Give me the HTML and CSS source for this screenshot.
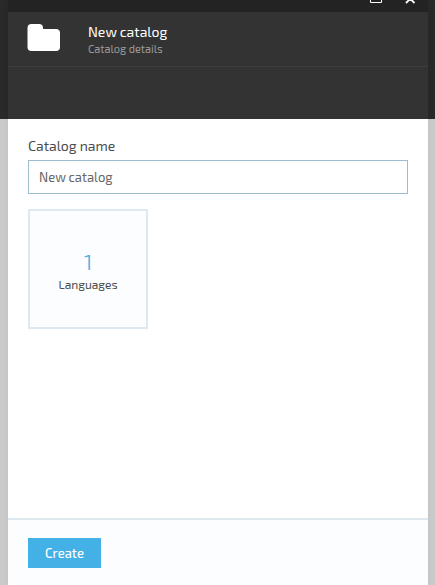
FILE: index.html
```
<!DOCTYPE html>
<html lang="en">
<head>
<meta charset="utf-8">
<title>New catalog</title>
<link rel="stylesheet" href="styles.css">
</head>
<body>
<main class="blade">
  <div class="toolbar">
    <svg class="controls" width="48" height="12" viewBox="0 0 48 12" fill="none" stroke="#fff">
      <path d="M.5 -6v8.500h11v-8.500"/>
      <path d="M36 3l8.500-8.500M44.500 3l-8.500-8.500" stroke-width="1.800"/>
    </svg>
  </div>
  <header class="header">
    <svg class="folder" width="33" height="27" viewBox="0 0 33 27" fill="#fff">
      <path d="M4.500 0h7.500q4 0 4 4V5h13q4 0 4 4v14q0 4-4 4H4.500q-4 0-4-4V4q0-4 4-4z"/>
    </svg>
    <div class="heading">
      <h1 class="title"><span>New catalog</span></h1>
      <div class="subtitle"><span>Catalog details</span></div>
    </div>
  </header>
  <div class="subheader"></div>
  <section class="content">
    <label class="label" for="name"><span>Catalog name</span></label>
    <input class="input" id="name" type="text" value="New catalog">
    <div class="tile">
      <div class="count">1</div>
      <div class="caption"><span>Languages</span></div>
    </div>
  </section>
  <footer class="footer">
    <button class="button" type="button"><span>Create</span></button>
  </footer>
</main>
</body>
</html>
```
FILE: styles.css
```
* { box-sizing: border-box; }
body {
  margin: 0;
  height: 585px;
  padding: 0 7px 0 8px;
  overflow: hidden;
  background: linear-gradient(#292929 119px, #cacaca 119px);
  font-family: "Exo 2", Roboto, sans-serif;
  color: #4d4d4d;
}
.blade {
  display: flex;
  flex-direction: column;
  height: 585px;
  background: #fff;
  box-shadow: 0 0 5px rgba(0, 0, 0, .05);
}
.toolbar {
  display: flex;
  justify-content: flex-end;
  height: 12px;
  padding-right: 10px;
  background: #232323;
}
.header {
  display: flex;
  height: 55px;
  padding: 12px 20px 0 19px;
  background: #333;
  border-bottom: 1px solid #3d3d3d;
}
.folder { flex: none; margin-right: 28px; }
.title {
  margin: -1px 0 0;
  font-size: 14px;
  line-height: 18px;
  font-weight: 400;
  color: #fff;
}
.subtitle {
  font-size: 11px;
  line-height: 16px;
  color: #999;
}
.subheader { height: 52px; background: #333; }
.content { flex: 1; padding: 17px 20px 0; }
.label {
  display: block;
  height: 24px;
  font-size: 14px;
  line-height: 20px;
}
.input {
  display: block;
  width: 100%;
  height: 34px;
  margin-bottom: 15px;
  padding: 0 10px;
  border: 1px solid #9bbdd1;
  outline: 0;
  border-radius: 0;
  background: #fff;
  color: #666;
  font: 13px "Exo 2", Roboto, sans-serif;
}
.tile {
  display: flex;
  flex-direction: column;
  align-items: center;
  width: 120px;
  height: 120px;
  padding-top: 36px;
  border: 2px solid #dee8ee;
  background: #fbfdff;
}
.count {
  font-size: 22px;
  font-weight: 300;
  line-height: 29px;
  color: #43b0e6;
}
.caption { font-size: 12px; line-height: 16px; }
.footer {
  height: 67px;
  padding: 18px 20px 0;
  border-top: 2px solid #dee8ef;
  background: #fbfdff;
}
.button {
  display: block;
  width: 73px;
  height: 30px;
  padding: 0;
  border: 0;
  background: #43b0e6;
  color: #fff;
  font: 500 13px "Exo 2", Roboto, sans-serif;
}
```
